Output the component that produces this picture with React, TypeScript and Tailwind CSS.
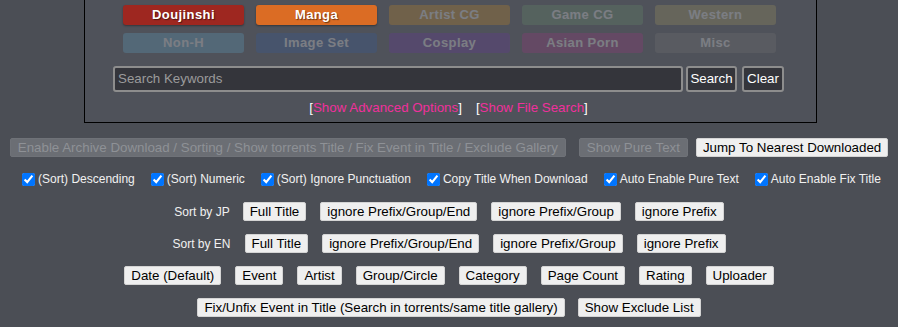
import React from "react";

const categories = [
  { name: "Doujinshi", bg: "bg-[#9e2720]", on: true },
  { name: "Manga", bg: "bg-[#db6c24]", on: true },
  { name: "Artist CG", bg: "bg-[#d38f1d]", on: false },
  { name: "Game CG", bg: "bg-[#6a936d]", on: false },
  { name: "Western", bg: "bg-[#ab9f60]", on: false },
  { name: "Non-H", bg: "bg-[#5fa9cf]", on: false },
  { name: "Image Set", bg: "bg-[#325ca2]", on: false },
  { name: "Cosplay", bg: "bg-[#6a32a2]", on: false },
  { name: "Asian Porn", bg: "bg-[#a23282]", on: false },
  { name: "Misc", bg: "bg-[#777777]", on: false },
];

const checks = [
  "(Sort) Descending",
  "(Sort) Numeric",
  "(Sort) Ignore Punctuation",
  "Copy Title When Download",
  "Auto Enable Pure Text",
  "Auto Enable Fix Title",
];

const titleSorts = ["Full Title", "ignore Prefix/Group/End", "ignore Prefix/Group", "ignore Prefix"];
const fieldSorts = ["Date (Default)", "Event", "Artist", "Group/Circle", "Category", "Page Count", "Rating", "Uploader"];

function Btn({ children }: { children: React.ReactNode }) {
  return (
    <button className="h-[19px] px-[6px] bg-[#efefef] border border-[#d4d4d4] rounded-[2px] text-[13.33px] leading-[15px] text-black whitespace-nowrap">
      {children}
    </button>
  );
}

function DisabledBtn({ children }: { children: React.ReactNode }) {
  return (
    <button className="h-[19px] px-[7px] bg-[#6b6e74] border border-[#6f7278] rounded-[2px] text-[13.33px] leading-[15px] text-[#8e9196] whitespace-nowrap">
      {children}
    </button>
  );
}

export default function App() {
  return (
    <div className="min-h-screen bg-[#4b4e55] text-white overflow-hidden" style={{ fontFamily: '"Liberation Sans", Arial, sans-serif' }}>
      {/* Search panel */}
      <div className="ml-[84px] w-[733px] border-x border-b border-black bg-[#4f525a] pt-[5px] pb-[7px]">
        <div className="grid grid-cols-[repeat(5,121px)] gap-x-[12px] gap-y-[8px] justify-center ml-[-2px]">
          {categories.map((c) => (
            <div
              key={c.name}
              className={`h-[20px] rounded-[3px] flex items-center justify-center text-[13px] font-bold tracking-[0.4px] text-white ${c.bg} ${c.on ? "shadow-[0_1px_2px_rgba(0,0,0,0.35)] [text-shadow:1px_1px_1px_rgba(0,0,0,0.5)]" : "opacity-25"}`}
            >
              {c.name}
            </div>
          ))}
        </div>

        <div className="flex justify-center items-center mt-[13px] ml-[-4px]">
          <div className="w-[570px] h-[26px] bg-[#34353b] border-2 border-[#8d8d8d] rounded-[3px] px-[3px] flex items-center text-[13.33px] text-[#9b9b9b]">
            Search Keywords
          </div>
          <button className="ml-[3px] h-[26px] w-[51px] bg-[#34353b] border-2 border-[#8d8d8d] rounded-[3px] text-[13.33px] text-white">
            Search
          </button>
          <button className="ml-[5px] h-[26px] w-[42px] bg-[#34353b] border-2 border-[#8d8d8d] rounded-[3px] text-[13.33px] text-white">
            Clear
          </button>
        </div>

        <div className="flex justify-center gap-[14px] mt-[8px] text-[13.33px] leading-[15px] text-white ml-[-4px]">
          <span>
            [<span className="text-[#f0309c]">Show Advanced Options</span>]
          </span>
          <span>
            [<span className="text-[#f0309c]">Show File Search</span>]
          </span>
        </div>
      </div>

      {/* Options */}
      <div className="flex flex-col items-center gap-[13px] mt-[15px]">
        <div className="flex items-center h-[19px]">
          <DisabledBtn>Enable Archive Download / Sorting / Show torrents Title / Fix Event in Title / Exclude Gallery</DisabledBtn>
          <div className="ml-[13px] flex">
            <DisabledBtn>Show Pure Text</DisabledBtn>
          </div>
          <div className="ml-[8px] flex">
            <Btn>Jump To Nearest Downloaded</Btn>
          </div>
        </div>

        <div className="flex items-center h-[19px] gap-[16px] ml-[5px] text-[12px] leading-[15px] text-[#f1f1f1]">
          {checks.map((c) => (
            <label key={c} className="flex items-center">
              <input type="checkbox" defaultChecked className="w-[13px] h-[13px] m-0 mr-[3px] accent-[#0075ff]" />
              {c}
            </label>
          ))}
        </div>

        <div className="flex items-center h-[19px] gap-[14px]">
          <span className="text-[12px] text-[#f1f1f1] mr-[-1px]">Sort by JP</span>
          {titleSorts.map((s) => (
            <Btn key={s}>{s}</Btn>
          ))}
        </div>

        <div className="flex items-center h-[19px] gap-[14px]">
          <span className="text-[12px] text-[#f1f1f1]">Sort by EN</span>
          {titleSorts.map((s) => (
            <Btn key={s}>{s}</Btn>
          ))}
        </div>

        <div className="flex items-center h-[19px] gap-[14px]">
          {fieldSorts.map((s) => (
            <Btn key={s}>{s}</Btn>
          ))}
        </div>

        <div className="flex items-center h-[19px] gap-[13px]">
          <Btn>Fix/Unfix Event in Title (Search in torrents/same title gallery)</Btn>
          <Btn>Show Exclude List</Btn>
        </div>
      </div>
    </div>
  );
}
